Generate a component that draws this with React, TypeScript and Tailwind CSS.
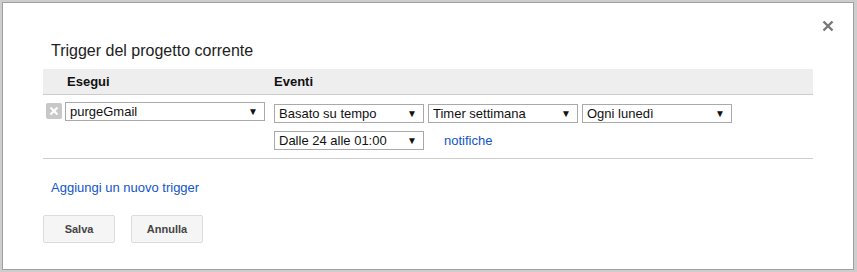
import React from "react";

const font = { fontFamily: '"Liberation Sans", Arial, sans-serif' };

function FakeSelect({ label, width }: { label: string; width: string }) {
  return (
    <div
      className={`${width} h-[19px] border border-[#a9a9a9] bg-white flex items-center justify-between pl-[4px] pr-[6px] text-[13px] text-[#111] leading-none`}
    >
      <span>{label}</span>
      <span className="text-[10px] text-[#111]">▼</span>
    </div>
  );
}

export default function App() {
  return (
    <div className="w-[857px] h-[272px] bg-[#cdcdcd] pt-[2px] pl-[2px] overflow-hidden" style={font}>
      <div className="relative w-[852px] h-[268px] bg-white border border-[#9f9f9f]">
        {/* close button */}
        <button className="absolute top-[16px] right-[19px] w-[13px] h-[13px] flex items-center justify-center">
          <svg width="12" height="12" viewBox="0 0 12 12">
            <path d="M1.5 1.5 L10.5 10.5 M10.5 1.5 L1.5 10.5" stroke="#777" strokeWidth="2.4" strokeLinecap="butt" />
          </svg>
        </button>

        <div className="pt-[39px] px-[40px]">
          <h2 className="pl-[8px] text-[16px] leading-[18px] text-[#222] font-normal">Trigger del progetto corrente</h2>

          <div className="mt-[9px] w-[770px]">
            {/* header */}
            <div className="h-[26px] bg-[#eeeeee] border-b border-[#cccccc] flex items-center text-[13px] font-bold text-[#111]">
              <div className="w-[231px] pl-[24px]">Esegui</div>
              <div>Eventi</div>
            </div>

            {/* trigger row */}
            <div className="flex border-b border-[#cccccc] pb-[8px]">
              <div className="w-[231px] pl-[3px] pt-[7px] flex items-start gap-[3px]">
                <div className="mt-[1px] w-[16px] h-[16px] rounded-[2px] bg-[#c8c8c8] flex items-center justify-center">
                  <svg width="10" height="10" viewBox="0 0 10 10">
                    <path d="M1.5 1.5 L8.5 8.5 M8.5 1.5 L1.5 8.5" stroke="#fff" strokeWidth="2.2" />
                  </svg>
                </div>
                <FakeSelect label="purgeGmail" width="w-[200px]" />
              </div>
              <div className="pt-[9px] flex flex-col gap-[8px]">
                <div className="flex gap-[4px]">
                  <FakeSelect label="Basato su tempo" width="w-[150px]" />
                  <FakeSelect label="Timer settimana" width="w-[150px]" />
                  <FakeSelect label="Ogni lunedì" width="w-[150px]" />
                </div>
                <div className="flex items-center gap-[20px]">
                  <FakeSelect label="Dalle 24 alle 01:00" width="w-[150px]" />
                  <a className="text-[13px] text-[#1155cc] leading-none cursor-pointer">notifiche</a>
                </div>
              </div>
            </div>
          </div>

          <div className="mt-[21px] pl-[8px] text-[13px] leading-[16px]">
            <a className="text-[#1155cc] cursor-pointer">Aggiungi un nuovo trigger</a>
          </div>

          <div className="mt-[19px] flex gap-[16px]">
            <button className="w-[72px] h-[28px] bg-[#f5f5f5] border border-[#dcdcdc] rounded-[2px] text-[11px] font-bold text-[#444]">
              Salva
            </button>
            <button className="w-[72px] h-[28px] bg-[#f5f5f5] border border-[#dcdcdc] rounded-[2px] text-[11px] font-bold text-[#444]">
              Annulla
            </button>
          </div>
        </div>
      </div>
    </div>
  );
}
